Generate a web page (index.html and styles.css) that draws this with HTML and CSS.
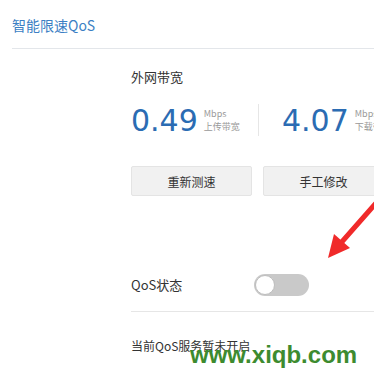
FILE: index.html
```html
<!DOCTYPE html>
<html lang="zh-CN">
<head>
    <meta charset="UTF-8">
    <title>智能限速QoS</title>
    <link rel="stylesheet" href="styles.css">
</head>
<body>
    <div class="header">
        <h1>智能限速QoS</h1>
    </div>

    <div class="panel">
        <h2 class="label">外网带宽</h2>
        <div class="speeds">
            <div class="speed">
                <span class="num">0.49</span>
                <div class="unit">
                    <span>Mbps</span>
                    <span>上传带宽</span>
                </div>
            </div>
            <div class="speed split">
                <span class="num">4.07</span>
                <div class="unit">
                    <span>Mbps</span>
                    <span>下载带宽</span>
                </div>
            </div>
        </div>

        <div class="buttons">
            <button class="btn">重新测速</button>
            <button class="btn">手工修改</button>
        </div>

        <div class="qos-row">
            <span class="label">QoS状态</span>
            <div class="switch"><div class="knob"></div></div>
        </div>

        <p class="status">当前QoS服务暂未开启</p>
    </div>

    <!-- red arrow drawn over the page -->
    <svg class="arrow" width="60" height="70" viewBox="0 0 60 70">
        <path d="M58 2 L14 52" stroke="#f02a2a" stroke-width="5" stroke-linecap="round"/>
        <polygon points="2,66 8,42 24,56" fill="#f02a2a"/>
    </svg>

    <div class="watermark">www.xiqb.com</div>
</body>
</html>
```

FILE: styles.css
```css
body {
    margin: 0;
    background: #fff;
    font-family: "Noto Sans CJK SC", "Noto Sans", sans-serif;
    color: #333;
    width: 374px;
    height: 371px;
    overflow: hidden;
    position: relative;
}

.header {
    margin-left: 12px;
    padding-top: 14px;
    height: 34px;
    border-bottom: 1px solid #e3e6ea;
}

.header h1 {
    margin: 0;
    font-size: 14px;
    font-weight: normal;
    color: #3c7fc4;
    line-height: 22px;
}

.panel {
    margin-left: 131px;
    padding-top: 19px;
}

.label {
    margin: 0;
    font-size: 13px;
    font-weight: normal;
    color: #333;
    line-height: 18px;
}

.speeds {
    display: flex;
    margin-top: 18px;
    height: 32px;
}

.speed {
    display: flex;
    align-items: center;
    width: 127px;
    flex-shrink: 0;
}

.split {
    border-left: 1px solid #e6e6e6;
    padding-left: 23px;
}

.num {
    font-family: "DejaVu Sans", sans-serif;
    font-size: 30px;
    color: #2b6cb3;
    margin-right: 6px;
}

.unit {
    display: flex;
    flex-direction: column;
    font-size: 9px;
    color: #999;
    line-height: 13px;
    white-space: nowrap;
}

.buttons {
    display: flex;
    gap: 11px;
    margin-top: 30px;
}

.btn {
    width: 121px;
    height: 30px;
    flex-shrink: 0;
    background: #f1f1f1;
    border: 1px solid #e4e4e4;
    border-radius: 2px;
    font-family: "Noto Sans CJK SC", sans-serif;
    font-size: 12px;
    color: #333;
    padding: 0;
}

.qos-row {
    display: flex;
    align-items: center;
    height: 22px;
    margin-top: 78px;
}

.qos-row .label {
    width: 123px;
}

.switch {
    width: 55px;
    height: 22px;
    border-radius: 11px;
    background: #c9c9c9;
    position: relative;
}

.knob {
    position: absolute;
    left: 1px;
    top: 1px;
    width: 18px;
    height: 18px;
    border-radius: 50%;
    background: #fff;
    border: 1px solid #bdbdbd;
}

.status {
    margin: 15px 0 0;
    padding-top: 25px;
    border-top: 1px solid #e6e6e6;
    font-size: 12px;
    line-height: 17px;
    color: #333;
}

.arrow {
    position: absolute;
    left: 326px;
    top: 192px;
}

.watermark {
    position: absolute;
    left: 190px;
    top: 341px;
    font-family: "Liberation Sans", sans-serif;
    font-size: 24px;
    font-weight: bold;
    color: #3d8b2f;
}
```
